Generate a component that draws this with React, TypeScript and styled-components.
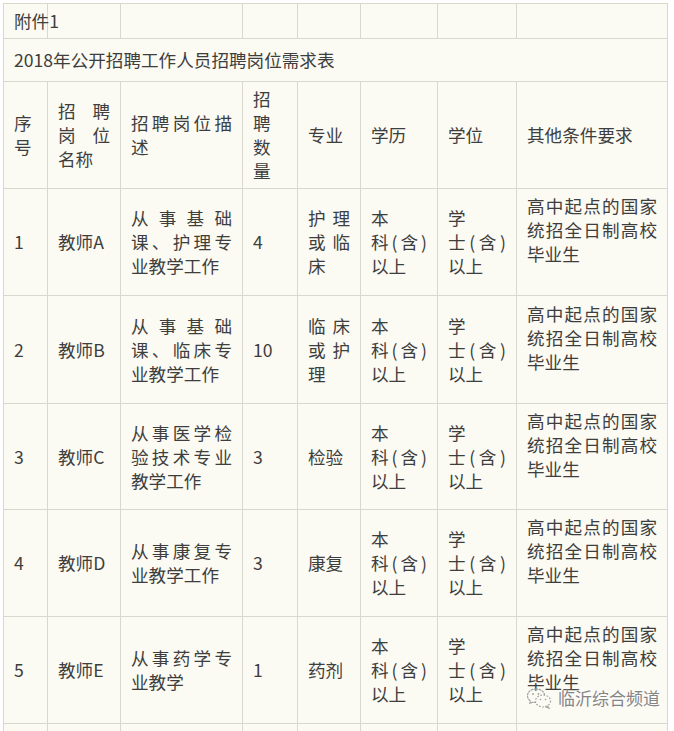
import React from 'react';
import styled, { createGlobalStyle } from 'styled-components';

const GlobalStyle = createGlobalStyle`
  html, body { margin: 0; padding: 0; background: #ffffff; }
  body { font-family: "Noto Sans CJK SC", "Noto Sans", sans-serif; }
`;

const Page = styled.div`
  position: relative;
  width: 674px;
  height: 731px;
  overflow: hidden;
  padding: 3px 0 0 3px;
  box-sizing: border-box;
  background: #ffffff;
`;

const Table = styled.table`
  border-collapse: collapse;
  table-layout: fixed;
  width: 664px;
  background: #fbfaf3;
  color: #3e3e3e;
  font-size: 17.6px;
  line-height: 24px;
`;

const Col = styled.col<{ $w: number }>`
  width: ${(p) => p.$w}px;
`;

const Row = styled.tr<{ $h: number }>`
  height: ${(p) => p.$h}px;
`;

const Cell = styled.td<{ $extraLine?: boolean; $nowrap?: boolean }>`
  border: 1px solid #d9d8ce;
  padding: 0 10px ${(p) => (p.$extraLine ? '24px' : '0')} 10px;
  text-align: justify;
  vertical-align: middle;
  white-space: ${(p) => (p.$nowrap ? 'nowrap' : 'normal')};
  overflow: visible;
`;

const NoBreak = styled.span`
  white-space: nowrap;
`;

const Watermark = styled.div`
  position: absolute;
  left: 526px;
  top: 686px;
  display: flex;
  align-items: center;
  gap: 6px;
  color: #858585;
  font-size: 17px;
  line-height: 24px;
  text-shadow: 0 0 2px #ffffff, 0 0 3px #ffffff;
`;

const columns = [44, 73, 122, 55, 63, 77, 79, 151];

const rows = [
  { no: '1', name: '教师A', desc: '从事基础课、护理专业教学工作', count: '4', major: '护理或临床', h: 107 },
  { no: '2', name: '教师B', desc: '从事基础课、临床专业教学工作', count: '10', major: '临床或护理', h: 108 },
  { no: '3', name: '教师C', desc: '从事医学检验技术专业教学工作', count: '3', major: '检验', h: 106 },
  { no: '4', name: '教师D', desc: '从事康复专业教学工作', count: '3', major: '康复', h: 107 },
  { no: '5', name: '教师E', desc: '从事药学专业教学', count: '1', major: '药剂', h: 107 },
];

const WeChatIcon = () => (
  <svg width="26" height="22" viewBox="0 0 26 22" fill="none">
    <path
      d="M10 2C5 2 1.5 5 1.5 8.8c0 2.2 1.2 4 3 5.2l-0.8 2.6 3-1.6c1 0.3 2.1 0.5 3.3 0.5"
      stroke="#a0a0a0"
      strokeWidth="1.2"
      strokeDasharray="1.6 1.6"
      strokeLinecap="round"
    />
    <path
      d="M10 2c4.6 0 8.2 2.6 8.5 6"
      stroke="#a0a0a0"
      strokeWidth="1.2"
      strokeDasharray="1.6 1.6"
      strokeLinecap="round"
    />
    <ellipse cx="17" cy="14" rx="7.5" ry="6" stroke="#a0a0a0" strokeWidth="1.2" strokeDasharray="1.6 1.6" />
    <path d="M21.5 19l1.5 2.2-3.4-1.4" stroke="#a0a0a0" strokeWidth="1.1" strokeLinecap="round" />
    <circle cx="7" cy="7" r="0.9" fill="#a0a0a0" />
    <circle cx="12.5" cy="7" r="0.9" fill="#a0a0a0" />
    <circle cx="14.5" cy="12.5" r="0.8" fill="#a0a0a0" />
    <circle cx="19.5" cy="12.5" r="0.8" fill="#a0a0a0" />
  </svg>
);

export default function App() {
  return (
    <>
      <GlobalStyle />
      <Page>
        <Table>
          <colgroup>
            {columns.map((w, i) => (
              <Col key={i} $w={w} />
            ))}
          </colgroup>
          <tbody>
            <Row $h={35}>
              <Cell $nowrap>附件1</Cell>
              <Cell />
              <Cell />
              <Cell />
              <Cell />
              <Cell />
              <Cell />
              <Cell />
            </Row>
            <Row $h={43}>
              <Cell colSpan={8}>2018年公开招聘工作人员招聘岗位需求表</Cell>
            </Row>
            <Row $h={107}>
              <Cell>序号</Cell>
              <Cell>招聘岗位名称</Cell>
              <Cell>招聘岗位描述</Cell>
              <Cell>招聘数量</Cell>
              <Cell>专业</Cell>
              <Cell>学历</Cell>
              <Cell>学位</Cell>
              <Cell>其他条件要求</Cell>
            </Row>
            {rows.map((r) => (
              <Row key={r.no} $h={r.h}>
                <Cell>{r.no}</Cell>
                <Cell>{r.name}</Cell>
                <Cell>{r.desc}</Cell>
                <Cell>{r.count}</Cell>
                <Cell>{r.major}</Cell>
                <Cell>
                  本<NoBreak>科(含)</NoBreak>以上
                </Cell>
                <Cell>
                  学<NoBreak>士(含)</NoBreak>以上
                </Cell>
                <Cell $extraLine>高中起点的国家统招全日制高校毕业生</Cell>
              </Row>
            ))}
            <Row $h={107}>
              <Cell />
              <Cell />
              <Cell />
              <Cell />
              <Cell />
              <Cell />
              <Cell />
              <Cell />
            </Row>
          </tbody>
        </Table>
        <Watermark>
          <WeChatIcon />
          <span>临沂综合频道</span>
        </Watermark>
      </Page>
    </>
  );
}
